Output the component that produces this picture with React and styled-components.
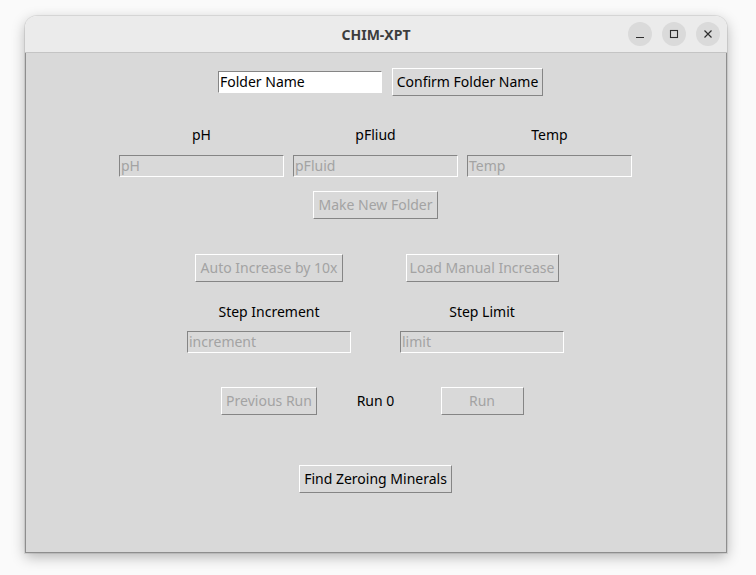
import styled, { createGlobalStyle } from "styled-components";

const GlobalStyle = createGlobalStyle`
  html, body {
    margin: 0;
    padding: 0;
    background: #fafafa;
  }
  body {
    font-family: "Noto Sans", "DejaVu Sans", sans-serif;
  }
`;

const Desk = styled.div`
  width: 756px;
  height: 575px;
  padding: 16px 0 0 25px;
  box-sizing: border-box;
`;

const Window = styled.div`
  width: 702px;
  height: 537px;
  display: flex;
  flex-direction: column;
  border-radius: 12px 12px 0 0;
  box-shadow: 0 4px 14px rgba(0, 0, 0, 0.28), 0 0 0 1px rgba(0, 0, 0, 0.08);
  overflow: hidden;
`;

const TitleBar = styled.div`
  height: 36px;
  flex-shrink: 0;
  background: #ebebeb;
  border-bottom: 1px solid #c4c4c4;
  display: grid;
  grid-template-columns: 1fr auto 1fr;
  align-items: center;
`;

const Title = styled.div`
  grid-column: 2;
  font-family: "Noto Sans", sans-serif;
  font-weight: 700;
  font-size: 14px;
  color: #3d3d3d;
`;

const Controls = styled.div`
  justify-self: end;
  display: flex;
  gap: 10px;
  padding-right: 7px;
`;

const CtlButton = styled.div`
  width: 24px;
  height: 24px;
  border-radius: 50%;
  background: #dadada;
  display: flex;
  align-items: center;
  justify-content: center;
`;

const Body = styled.div`
  flex: 1;
  background: #d9d9d9;
  border: 1px solid #8e8e8e;
  border-top: none;
  display: flex;
  flex-direction: column;
  align-items: center;
  padding: 15px 1px 0 0;
  font-size: 14px;
  color: #000;
`;

const TopRow = styled.div`
  display: flex;
  align-items: center;
  gap: 10px;
  padding-left: 10px;
`;

const Entry = styled.div`
  width: ${(p) => p.$w || 164}px;
  height: 22px;
  box-sizing: border-box;
  border: 1px solid;
  border-color: #858585 #ffffff #ffffff #858585;
  background: ${(p) => (p.$disabled ? "#d9d9d9" : "#ffffff")};
  color: ${(p) => (p.$disabled ? "#a3a3a3" : "#000")};
  font-size: 14px;
  line-height: 19px;
  padding-left: 1px;
  white-space: nowrap;
  overflow: hidden;
`;

const Button = styled.div`
  height: 28px;
  box-sizing: border-box;
  padding: 0 5px 1px;
  border: 1px solid;
  border-color: #ffffff #858585 #858585 #ffffff;
  background: #d9d9d9;
  color: ${(p) => (p.$disabled ? "#a3a3a3" : "#000")};
  display: flex;
  align-items: center;
  justify-content: center;
  white-space: nowrap;
  width: ${(p) => (p.$w ? `${p.$w}px` : "auto")};
`;

const Label = styled.div`
  white-space: nowrap;
  text-align: center;
  line-height: 20px;
`;

const ParamGrid = styled.div`
  margin-top: 29px;
  display: grid;
  grid-template-columns: repeat(3, 165px);
  column-gap: 9px;
  row-gap: 10px;
  justify-items: center;
`;

const ParamEntry = styled(Entry)`
  width: 165px;
`;

const FolderButton = styled(Button)`
  margin-top: 14px;
`;

const StepGrid = styled.div`
  display: grid;
  grid-template-columns: 164px 49px 164px;
  justify-items: center;
  align-items: center;
  margin-top: ${(p) => p.$top}px;
  row-gap: ${(p) => p.$gap || 0}px;
`;

const Cell = styled.div`
  grid-column: ${(p) => p.$col};
  display: flex;
  justify-content: center;
  width: 100%;
`;

const FindButton = styled(Button)`
  margin-top: 50px;
`;

function Minimize() {
  return (
    <svg width="10" height="10" viewBox="0 0 10 10">
      <path d="M1 8.5h8" stroke="#2e2e2e" strokeWidth="1.2" />
    </svg>
  );
}

function Maximize() {
  return (
    <svg width="10" height="10" viewBox="0 0 10 10">
      <rect x="1.5" y="1.5" width="7" height="7" fill="none" stroke="#2e2e2e" strokeWidth="1.1" />
    </svg>
  );
}

function Close() {
  return (
    <svg width="10" height="10" viewBox="0 0 10 10">
      <path d="M1.5 1.5l7 7M8.5 1.5l-7 7" stroke="#2e2e2e" strokeWidth="1.2" />
    </svg>
  );
}

export default function App() {
  return (
    <>
      <GlobalStyle />
      <Desk>
        <Window>
          <TitleBar>
            <Title>CHIM-XPT</Title>
            <Controls>
              <CtlButton><Minimize /></CtlButton>
              <CtlButton><Maximize /></CtlButton>
              <CtlButton><Close /></CtlButton>
            </Controls>
          </TitleBar>
          <Body>
            <TopRow>
              <Entry>Folder Name</Entry>
              <Button $w={151}>Confirm Folder Name</Button>
            </TopRow>

            <ParamGrid>
              <Label>pH</Label>
              <Label>pFliud</Label>
              <Label>Temp</Label>
              <ParamEntry $disabled>pH</ParamEntry>
              <ParamEntry $disabled>pFluid</ParamEntry>
              <ParamEntry $disabled>Temp</ParamEntry>
            </ParamGrid>

            <FolderButton $disabled $w={125}>Make New Folder</FolderButton>

            <StepGrid $top={35}>
              <Cell $col={1}><Button $disabled $w={148}>Auto Increase by 10x</Button></Cell>
              <Cell $col={3}><Button $disabled $w={153}>Load Manual Increase</Button></Cell>
            </StepGrid>

            <StepGrid $top={20} $gap={9}>
              <Cell $col={1}><Label>Step Increment</Label></Cell>
              <Cell $col={3}><Label>Step Limit</Label></Cell>
              <Cell $col={1}><Entry $disabled>increment</Entry></Cell>
              <Cell $col={3}><Entry $disabled>limit</Entry></Cell>
            </StepGrid>

            <StepGrid $top={34}>
              <Cell $col={1}><Button $disabled $w={96}>Previous Run</Button></Cell>
              <Cell $col={2}><Label>Run 0</Label></Cell>
              <Cell $col={3}><Button $disabled $w={83}>Run</Button></Cell>
            </StepGrid>

            <FindButton $w={153}>Find Zeroing Minerals</FindButton>
          </Body>
        </Window>
      </Desk>
    </>
  );
}
